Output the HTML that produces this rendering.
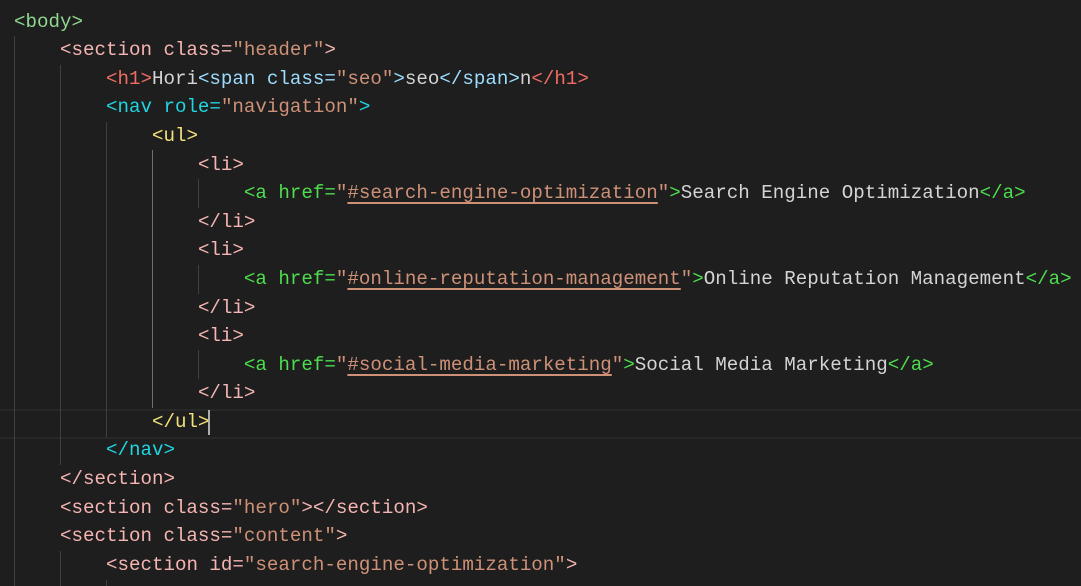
<!DOCTYPE html>
<html><head><meta charset="utf-8"><style>
html,body{margin:0;padding:0;background:#1e1e1e;width:1081px;height:586px;overflow:hidden}
.ed{position:relative;width:1081px;height:586px;font-family:"Liberation Mono",monospace;font-size:19.17px;}
.l{position:absolute;left:14px;height:28.58px;line-height:28.58px;white-space:pre;color:#d4d4d4}
.g{position:absolute;width:1px;background:#404040}
.cur{position:absolute;left:0;top:409px;width:1081px;height:26px;border-top:2px solid #282828;border-bottom:2px solid #282828}
.G{color:#8fd88f}.P{color:#f5b5b2}.R{color:#f06c62}.B{color:#9cdcfe}.C{color:#20d5e0}.Y{color:#f3e27a}.A{color:#4ddd4d}.S{color:#ce9178}.W{color:#d4d4d4}
.u{text-decoration:underline;text-decoration-color:#ce9178;text-underline-offset:4px;text-decoration-thickness:2px}
</style></head><body><div class="ed">
<div class="cur"></div>
<div class="g" style="left:14px;top:36px;height:550px"></div>
<div class="g" style="left:60px;top:65px;height:400px"></div>
<div class="g" style="left:106px;top:122px;height:315px"></div>
<div class="g" style="left:152px;top:150px;height:258px;background:#707070"></div>
<div class="g" style="left:198px;top:179px;height:29px"></div>
<div class="g" style="left:198px;top:265px;height:29px"></div>
<div class="g" style="left:198px;top:350px;height:29px"></div>
<div class="g" style="left:60px;top:551px;height:35px"></div>
<div class="g" style="left:106px;top:580px;height:6px"></div>
<div style="position:absolute;left:208px;top:410px;width:2px;height:25px;background:#aeafad"></div>
<div class="l" style="top:7.7px"><span class="G">&lt;body&gt;</span></div>
<div class="l" style="top:36.3px">    <span class="P">&lt;section class=</span><span class="S">"header"</span><span class="P">&gt;</span></div>
<div class="l" style="top:64.9px">        <span class="R">&lt;h1&gt;</span><span class="W">Hori</span><span class="B">&lt;span class=</span><span class="S">"seo"</span><span class="B">&gt;</span><span class="W">seo</span><span class="B">&lt;/span&gt;</span><span class="W">n</span><span class="R">&lt;/h1&gt;</span></div>
<div class="l" style="top:93.4px">        <span class="C">&lt;nav role=</span><span class="S">"navigation"</span><span class="C">&gt;</span></div>
<div class="l" style="top:122px">            <span class="Y">&lt;ul&gt;</span></div>
<div class="l" style="top:150.6px">                <span class="P">&lt;li&gt;</span></div>
<div class="l" style="top:179.2px">                    <span class="A">&lt;a href=</span><span class="S">"<span class="u">#search-engine-optimization</span>"</span><span class="A">&gt;</span><span class="W">Search Engine Optimization</span><span class="A">&lt;/a&gt;</span></div>
<div class="l" style="top:207.8px">                <span class="P">&lt;/li&gt;</span></div>
<div class="l" style="top:236.3px">                <span class="P">&lt;li&gt;</span></div>
<div class="l" style="top:264.9px">                    <span class="A">&lt;a href=</span><span class="S">"<span class="u">#online-reputation-management</span>"</span><span class="A">&gt;</span><span class="W">Online Reputation Management</span><span class="A">&lt;/a&gt;</span></div>
<div class="l" style="top:293.5px">                <span class="P">&lt;/li&gt;</span></div>
<div class="l" style="top:322.1px">                <span class="P">&lt;li&gt;</span></div>
<div class="l" style="top:350.7px">                    <span class="A">&lt;a href=</span><span class="S">"<span class="u">#social-media-marketing</span>"</span><span class="A">&gt;</span><span class="W">Social Media Marketing</span><span class="A">&lt;/a&gt;</span></div>
<div class="l" style="top:379.2px">                <span class="P">&lt;/li&gt;</span></div>
<div class="l" style="top:407.8px">            <span class="Y">&lt;/ul&gt;</span></div>
<div class="l" style="top:436.4px">        <span class="C">&lt;/nav&gt;</span></div>
<div class="l" style="top:465px">    <span class="P">&lt;/section&gt;</span></div>
<div class="l" style="top:493.6px">    <span class="P">&lt;section class=</span><span class="S">"hero"</span><span class="P">&gt;&lt;/section&gt;</span></div>
<div class="l" style="top:522.1px">    <span class="P">&lt;section class=</span><span class="S">"content"</span><span class="P">&gt;</span></div>
<div class="l" style="top:550.7px">        <span class="P">&lt;section id=</span><span class="S">"search-engine-optimization"</span><span class="P">&gt;</span></div>
</div></body></html>
